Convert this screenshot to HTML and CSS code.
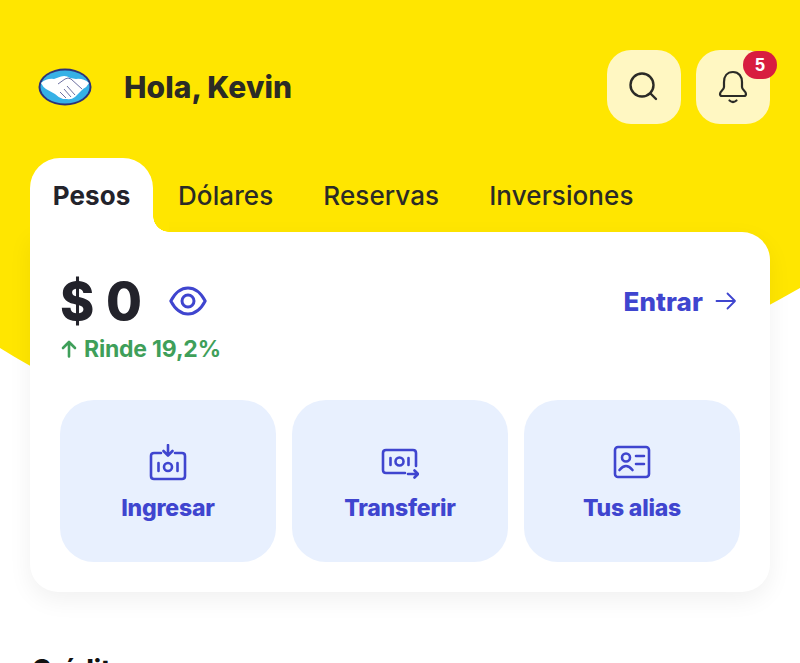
FILE: index.html
```html
<!DOCTYPE html>
<html lang="en">
<head>
    <meta charset="UTF-8">
    <meta name="viewport" content="width=device-width, initial-scale=1.0">
    <title>Inicio</title>
    <link rel="stylesheet" href="styles.css">
</head>
<body>
    <svg class="backdrop" width="800" height="480" viewBox="0 0 800 480">
        <path d="M0 0H800V288Q330 556 0 348Z" fill="#ffe600"/>
    </svg>

    <main class="screen">
        <header class="top">
            <svg class="logo" width="56" height="42" viewBox="0 0 56 42">
                <ellipse cx="28" cy="21" rx="26.5" ry="18.5" fill="#2d3277"/>
                <ellipse cx="28" cy="21" rx="24.5" ry="16.5" fill="#36b1e6"/>
                <path d="M4 17Q10 12 17 13L24 10.500Q29 9 33 12L39 13Q46 12 52 17Q50 21 46 23L38 31Q34 34 30 33L26 33Q22 32 18 28L9 23Q6 21 4 17Z" fill="#fff"/>
                <path d="M21 18L28 13Q31 11 34 13L45 23M30 20L38 29M27 23L34 31M23 26L29 32" fill="none" stroke="#6d70a0" stroke-width="1"/>
            </svg>
            <h1 class="greeting">Hola, Kevin</h1>
            <div class="top-actions">
                <button class="icon-btn">
                    <svg width="32" height="32" viewBox="0 0 32 32" fill="none" stroke="#2b2b26" stroke-width="2.400" stroke-linecap="round">
                        <circle cx="14" cy="14" r="11.500"/>
                        <path d="M22.500 22.500L28 28"/>
                    </svg>
                </button>
                <button class="icon-btn">
                    <svg width="32" height="36" viewBox="0 0 32 36" fill="none" stroke="#2b2b26" stroke-width="2.200" stroke-linecap="round" stroke-linejoin="round">
                        <path d="M16 3C10 3 7 7.500 7 13V18C7 21 3 22 3 25Q3 27 5 27H27Q29 27 29 25C29 22 25 21 25 18V13C25 7.500 22 3 16 3Z"/>
                        <path d="M12.500 31.500Q16 34.500 19.500 31.500"/>
                    </svg>
                    <span class="badge">5</span>
                </button>
            </div>
        </header>

        <nav class="tabs">
            <a class="tab tab-active">Pesos</a>
            <a class="tab">Dólares</a>
            <a class="tab">Reservas</a>
            <a class="tab">Inversiones</a>
        </nav>

        <section class="card">
            <div class="balance-row">
                <div class="balance">
                    <span class="amount">$ 0</span>
                    <svg width="38" height="30" viewBox="0 0 38 30" fill="none" stroke="#3f45cf" stroke-width="3" stroke-linejoin="round">
                        <path d="M1.800 15C6 7 12 2 19 2S32 7 36.200 15C32 23 26 28 19 28S6 23 1.800 15Z"/>
                        <circle cx="19" cy="15" r="6"/>
                    </svg>
                </div>
                <a class="enter">
                    Entrar
                    <svg width="22" height="20" viewBox="0 0 22 20" fill="none" stroke="#3f45cf" stroke-width="1.800" stroke-linecap="round" stroke-linejoin="round">
                        <path d="M1.500 10H20M12.500 2.500L20 10L12.500 17.500"/>
                    </svg>
                </a>
            </div>
            <p class="yield">
                <svg width="16" height="18" viewBox="0 0 16 18" fill="none" stroke="#3f9f5a" stroke-width="2.600" stroke-linecap="round" stroke-linejoin="round">
                    <path d="M8 16.500V2M2 8L8 2L14 8"/>
                </svg>
                Rinde 19,2%
            </p>

            <div class="actions">
                <a class="action">
                    <svg width="38" height="38" viewBox="0 0 38 38" fill="none" stroke="#3f45cf" stroke-width="2.600" stroke-linecap="round" stroke-linejoin="round">
                        <path d="M12 9H5Q2 9 2 12V32Q2 35 5 35H33Q36 35 36 32V12Q36 9 33 9H26"/>
                        <path d="M19 1V11M14.500 7L19 11.500L23.500 7"/>
                        <path d="M9.500 19V27M28.500 19V27"/>
                        <circle cx="19" cy="23" r="4"/>
                    </svg>
                    <span>Ingresar</span>
                </a>
                <a class="action">
                    <svg width="38" height="38" viewBox="0 0 38 38" fill="none" stroke="#3f45cf" stroke-width="2.600" stroke-linecap="round" stroke-linejoin="round">
                        <path d="M24 29H5Q2 29 2 26V9Q2 6 5 6H32Q35 6 35 9V22"/>
                        <path d="M9.500 14V21M27.500 14V21"/>
                        <circle cx="18.500" cy="17.500" r="4"/>
                        <path d="M27 30H37M33.500 26.500L37 30L33.500 33.500"/>
                    </svg>
                    <span>Transferir</span>
                </a>
                <a class="action">
                    <svg width="38" height="38" viewBox="0 0 38 38" fill="none" stroke="#3f45cf" stroke-width="2.600" stroke-linecap="round" stroke-linejoin="round">
                        <rect x="2" y="3" width="34" height="30" rx="3"/>
                        <circle cx="13" cy="13.500" r="4"/>
                        <path d="M6.500 26Q13 18 19.500 26"/>
                        <path d="M23 12H31M23 20H31"/>
                    </svg>
                    <span>Tus alias</span>
                </a>
            </div>
        </section>

        <h2 class="section-title">Créditos</h2>
    </main>
</body>
</html>
```

FILE: styles.css
```css
html, body {
    margin: 0;
    padding: 0;
    height: 100%;
    overflow: hidden;
    background-color: #fff;
}
body {
    font-family: Inter, "Liberation Sans", sans-serif;
    position: relative;
    color: #23232b;
}
.backdrop {
    position: absolute;
    top: 0;
    left: 0;
}
.screen {
    position: relative;
    padding: 50px 30px 0;
}
.top {
    display: flex;
    align-items: center;
    height: 74px;
    padding-left: 7px;
}
.logo {
    flex: none;
}
.greeting {
    margin: 0 0 0 31px;
    font-size: 30px;
    font-weight: 800;
    letter-spacing: 0.05px;
    color: #2b2b26;
}
.top-actions {
    display: flex;
    gap: 15px;
    margin-left: auto;
}
.icon-btn {
    position: relative;
    display: flex;
    align-items: center;
    justify-content: center;
    width: 74px;
    height: 74px;
    padding: 0;
    border: none;
    border-radius: 24px;
    background-color: #fff7c2;
}
.badge {
    position: absolute;
    top: 1px;
    right: -7px;
    width: 34px;
    height: 28px;
    border-radius: 14px;
    background-color: #d81e3f;
    color: #fff;
    font-size: 18px;
    font-weight: 800;
    line-height: 28px;
    text-align: center;
}
.tabs {
    display: flex;
    align-items: center;
    height: 74px;
    margin-top: 34px;
}
.tab {
    font-size: 26px;
    font-weight: 500;
    letter-spacing: 0.1px;
    margin-right: 50px;
    color: #2b2b26;
}
.tab-active {
    position: relative;
    display: flex;
    align-items: center;
    justify-content: center;
    width: 123px;
    height: 74px;
    margin-right: 25px;
    background-color: #fff;
    border-radius: 30px 30px 0 0;
    font-weight: 700;
    color: #23232b;
}
.tab-active::after {
    content: "";
    position: absolute;
    left: 100%;
    bottom: 0;
    width: 16px;
    height: 16px;
    background: radial-gradient(circle at 100% 0, #ffe600 15.500px, #fff 16px);
}
.card {
    padding: 36px 30px 30px;
    background-color: #fff;
    border-radius: 0 28px 28px 28px;
    box-shadow: 0 8px 24px rgba(0, 0, 0, 0.06);
}
.balance-row {
    display: flex;
    align-items: center;
    justify-content: space-between;
    height: 66px;
}
.balance {
    display: flex;
    align-items: center;
    gap: 27px;
}
.amount {
    font-size: 52px;
    font-weight: 800;
    letter-spacing: 0.2px;
}
.enter {
    display: flex;
    align-items: center;
    gap: 12px;
    font-size: 26px;
    font-weight: 800;
    letter-spacing: 0.1px;
    color: #3f45cf;
    margin-right: 3px;
}
.yield {
    display: flex;
    align-items: center;
    gap: 7px;
    margin: 1px 0 0 1px;
    font-size: 23px;
    font-weight: 700;
    letter-spacing: -0.2px;
    color: #3f9f5a;
}
.actions {
    display: grid;
    grid-template-columns: repeat(3, 1fr);
    gap: 16px;
    margin-top: 37px;
}
.action {
    display: flex;
    flex-direction: column;
    align-items: center;
    justify-content: center;
    gap: 12px;
    height: 162px;
    padding-top: 4px;
    box-sizing: border-box;
    border-radius: 34px;
    background-color: #e8f0fe;
    color: #3f45cf;
    font-size: 23px;
    font-weight: 800;
    letter-spacing: -0.2px;
}
.section-title {
    margin: 61px 0 0 2px;
    font-size: 26px;
    font-weight: 800;
    color: #111;
}
```
